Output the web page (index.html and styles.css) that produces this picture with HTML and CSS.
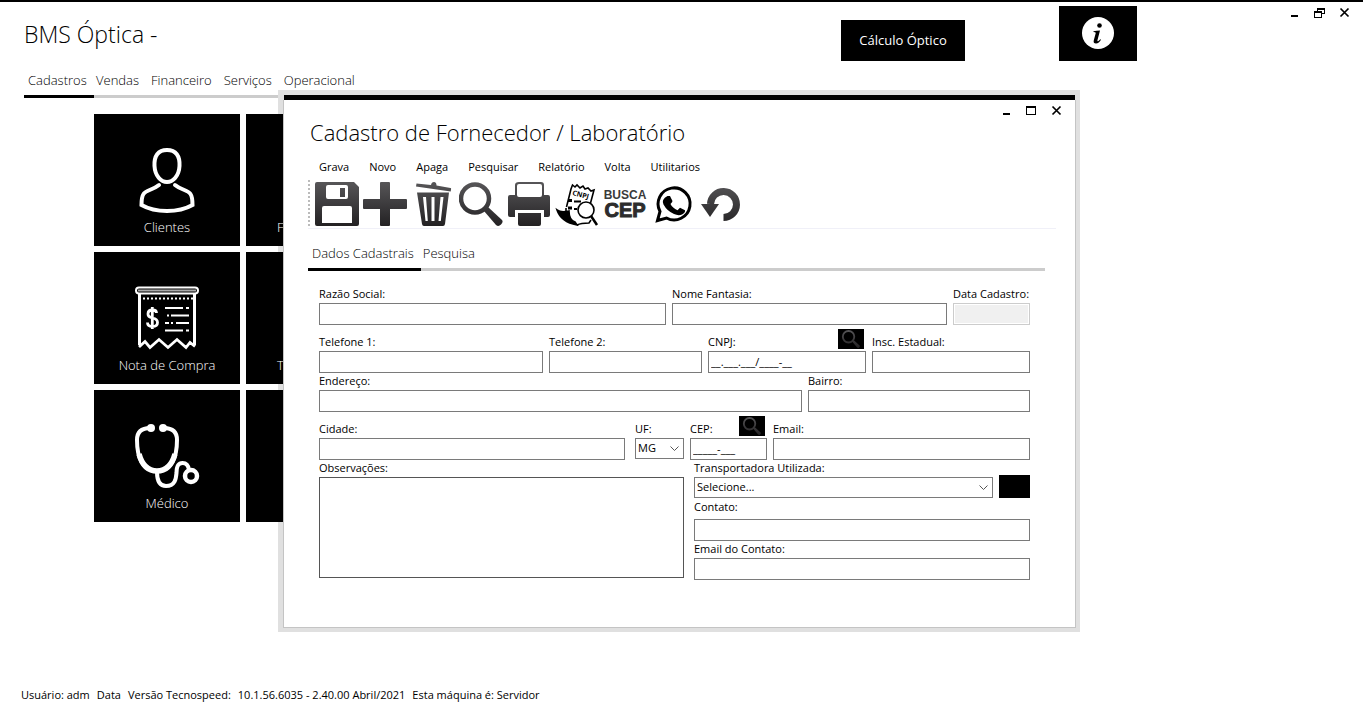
FILE: index.html
```html
<!DOCTYPE html>
<html lang="pt-BR">
<head>
<meta charset="utf-8">
<meta name="viewport" content="width=device-width, initial-scale=1">
<title>BMS Óptica</title>
<link rel="stylesheet" href="styles.css">
</head>
<body>
<svg class="defs" aria-hidden="true">
  <defs>
    <linearGradient id="steel" gradientUnits="userSpaceOnUse" x1="0" y1="0" x2="0" y2="44">
      <stop offset="0" stop-color="#575658"/>
      <stop offset="1" stop-color="#232123"/>
    </linearGradient>
    <symbol id="lens" viewBox="0 0 44 44">
      <circle cx="16" cy="16.500" r="14" fill="none" stroke="url(#steel)" stroke-width="4.500"/>
      <path d="M25 29l4-4 14 13q1.500 2-1 4.500t-5 .5z" fill="url(#steel)"/>
    </symbol>
    <symbol id="min" viewBox="0 0 11 11"><path d="M2 8h7v2H2z"/></symbol>
    <symbol id="max" viewBox="0 0 11 11"><path d="M0 1h10v9H0zM1 3v6h8V3z" fill-rule="evenodd"/></symbol>
    <symbol id="restore" viewBox="0 0 11 11"><path d="M3 1h8v6H8v4H0V4h3zM4 3v1h4v2h2V3zM1 6v4h6V6z" fill-rule="evenodd"/></symbol>
    <symbol id="close" viewBox="0 0 11 11"><path d="M1.500 1.500l8 8M9.500 1.500l-8 8" stroke="#000" stroke-width="1.700"/></symbol>
  </defs>
</svg>

<header class="topbar">
  <h1 class="title">BMS Óptica -</h1>
  <button class="calc" type="button">Cálculo Óptico</button>
  <button class="info" type="button" aria-label="Informações">
    <svg width="32" height="32" viewBox="0 0 32 32"><circle cx="16" cy="16" r="16" fill="#fff"/><circle cx="17.500" cy="8.500" r="2.300"/><path d="M11.500 14.200q3-.6 6.500-.7l-2.500 9.500q-.4 1.500.5 1.300 1-.3 2.300-2l.7.500q-2 3.700-5 3.700-3 0-2.200-3.200l1.900-7q.4-1.400-2.200-1.400z"/></svg>
  </button>
  <div class="controls">
    <button type="button" aria-label="Minimizar"><svg><use href="#min"/></svg></button>
    <button type="button" aria-label="Restaurar"><svg><use href="#restore"/></svg></button>
    <button type="button" aria-label="Fechar"><svg><use href="#close"/></svg></button>
  </div>
</header>

<nav class="mainnav">
  <a class="active" href="#cadastros">Cadastros</a>
  <a href="#vendas">Vendas</a>
  <a href="#financeiro">Financeiro</a>
  <a href="#servicos">Serviços</a>
  <a href="#operacional">Operacional</a>
</nav>

<main class="tiles">
  <button class="tile" type="button">
    <svg viewBox="0 0 64 64" fill="none" stroke="#fff" stroke-width="4" stroke-linecap="round"><path d="M32 2c9 0 13 6 12.500 16C44 28 38 34 32 34s-12-6-12.500-16C19 8 23 2 32 2z"/><path d="M24 37c-6 5-13 5-15.500 9-2 3-2 7-2 11 14 8 37 8 51 0 0-4 0-8-2-11-2.500-4-9.500-4-15.500-9"/></svg>
    <span>Clientes</span>
  </button>
  <button class="tile peek" type="button"><span>F</span></button>
  <button class="tile" type="button">
    <svg viewBox="0 0 64 64" fill="none" stroke="#fff"><rect x="1" y="1.500" width="62" height="6" rx="3" stroke-width="2"/><path d="M3 4.500h58" stroke="#aaa" stroke-width="2"/><path d="M4.500 8v51" stroke-width="3"/><path d="M59.500 8v51" stroke-width="3"/><path d="M4 61l6-5.500 5 6 9-8 9 8 9-8 9 8 4-5 5 4" stroke-width="2.800"/><path d="M8 12.500h50" stroke-width="2" stroke-dasharray="2 2"/><path d="M30 22h18M51 22h3M32 29.500h2M36 29.500h18M30 37h4M36 37h2M41 37h13M30 44.500h18M51 44.500h3" stroke-width="2.200"/><path d="M21.500 27q0-3-4-3-4.500 0-4.500 4 0 3 4.500 4 5 1 5 4.500 0 4-5 4-5 0-5-4M17.300 21v22" stroke-width="2.800"/></svg>
    <span>Nota de Compra</span>
  </button>
  <button class="tile peek" type="button"><span>Tr</span></button>
  <button class="tile" type="button">
    <svg viewBox="0 0 64 64" fill="none" stroke="#fff" stroke-width="4"><path d="M15 4C6 4 2 8 2 16c0 16 5 31 20 31s20-15 20-31c0-8-4-12-13-12"/><path d="M4 30c3 11 9 17 18 17s15-6 18-17" stroke-width="5.500"/><path d="M22 48c0 9 3 14 9 14 9 0 10-7 10.500-13 0-6 1-10 6-10 4 0 6 3 6.500 7"/><circle cx="56" cy="52" r="6" stroke-width="4.500"/><circle cx="16" cy="4" r="4" fill="#fff" stroke="none"/><circle cx="28" cy="4" r="4" fill="#fff" stroke="none"/></svg>
    <span>Médico</span>
  </button>
  <button class="tile peek" type="button" aria-label="Mais"></button>
</main>

<section class="dialog" role="dialog" aria-labelledby="dlg-title">
  <div class="controls">
    <button type="button" aria-label="Minimizar"><svg><use href="#min"/></svg></button>
    <button type="button" aria-label="Maximizar"><svg><use href="#max"/></svg></button>
    <button type="button" aria-label="Fechar"><svg><use href="#close"/></svg></button>
  </div>
  <h2 class="title" id="dlg-title">Cadastro de Fornecedor / Laboratório</h2>

  <div class="menu">
    <button type="button">Grava</button>
    <button type="button">Novo</button>
    <button type="button">Apaga</button>
    <button type="button">Pesquisar</button>
    <button type="button">Relatório</button>
    <button type="button">Volta</button>
    <button type="button">Utilitarios</button>
  </div>

  <div class="toolbar">
    <button type="button" aria-label="Gravar"><svg viewBox="0 0 44 44"><path fill="url(#steel)" fill-rule="evenodd" d="M2 0h37l5 5v37q0 2-2 2H2q-2 0-2-2V2q0-2 2-2zM13 3q-2 0-2 2v10q0 2 2 2h18q2 0 2-2V5q0-2-2-2zM25 6h5v9h-5zM9 24q-2 0-2 2v15h30V26q0-2-2-2z"/></svg></button>
    <button type="button" aria-label="Novo"><svg viewBox="0 0 44 44"><path fill="url(#steel)" d="M18 0h8q1 0 1 1v16h16q1 0 1 1v8q0 1-1 1H27v16q0 1-1 1h-8q-1 0-1-1V27H1q-1 0-1-1v-8q0-1 1-1h16V1q0-1 1-1z"/></svg></button>
    <button type="button" aria-label="Apagar"><svg viewBox="0 0 44 44"><path fill="url(#steel)" fill-rule="evenodd" d="M5.500 1.500L20 3q.5-3 3-3t2.500 3.500L39.500 6q.8.200.6 1l-.4 2.500L5 4.500zM6 10.500h32L34 42q-.3 2-2 2H13q-1.700 0-2-2zM12 15l2.500 24h2.300L15 15zM20.500 15v24h3V15zM29.500 15l-2 24h2.300l2.700-24z"/></svg></button>
    <button type="button" aria-label="Pesquisar"><svg><use href="#lens"/></svg></button>
    <button type="button" aria-label="Imprimir"><svg viewBox="0 0 44 44"><path fill="url(#steel)" fill-rule="evenodd" d="M12 0h22q3 0 3 3v10h4q2 0 2 2v18q0 2-2 2h-4v-7H8v7H3q-2 0-2-2V15q0-2 2-2h5V3q0-3 4-3zM12 2q-2 0-2 2v9q0 2 2 2h21q2 0 2-2V4q0-2-2-2zM11 31h23v11q0 2-2 2H13q-2 0-2-2z"/></svg></button>
    <button type="button" aria-label="Consultar CNPJ"><svg viewBox="0 0 44 44" fill="none" stroke="#000" stroke-width="1.600"><path d="M11.500 25L16 7l1.500-4L20 5l2-2 3 3 3-2 2 3 3-1 3 3 3-1-4 15"/><path d="M2 28q4 3 12 1 0 9 6 11l2 3Q6 40 2 28z" fill="#000"/><path d="M22 43q4-2 12-2l2-3M11 26v4"/><circle cx="31" cy="28" r="8" fill="#fff"/><path d="M36 34l6 9" stroke-width="2.500"/><path d="M13 18.500h4M13 26h4" stroke-width="3"/><path d="M19 19.500h7M19 27h3" stroke-width="2"/><text x="17" y="13" transform="rotate(14 17 13)" class="cnpj-text">CNPJ</text></svg></button>
    <button class="cep-logo" type="button"><span>BUSCA</span><strong>CEP</strong></button>
    <button type="button" aria-label="WhatsApp"><svg viewBox="0 0 44 44"><path d="M6.500 38.500l2.500-9A16 16 0 1 1 15.500 36z" fill="#fff" stroke="#000" stroke-width="3"/><path d="M16.500 14h2.500l2.500 5q0 1-2 3 2 4 7 6.200l2.500-2.500 5 2.500q.5 2.500-3 4.300-3.500 1.500-8-.5-7-3-10.500-9.500-2.500-5 4-8.500z"/></svg></button>
    <button type="button" aria-label="Voltar"><svg viewBox="0 0 44 44"><path d="M11.500 22a13 13 0 1 1 13 13.500" fill="none" stroke="url(#steel)" stroke-width="7"/><path d="M2 22h18l-9 13z" fill="url(#steel)"/></svg></button>
  </div>

  <div class="tabs">
    <button class="active" type="button">Dados Cadastrais</button>
    <button type="button">Pesquisa</button>
  </div>

  <form class="form">
    <div class="row row-name">
      <div class="field"><label for="razao">Razão Social:</label><input id="razao" type="text"></div>
      <div class="field"><label for="fantasia">Nome Fantasia:</label><input id="fantasia" type="text"></div>
      <div class="field"><label for="data">Data Cadastro:</label><input id="data" type="text" disabled></div>
    </div>
    <div class="row row-phone spaced">
      <div class="field"><label for="tel1">Telefone 1:</label><input id="tel1" type="text"></div>
      <div class="field"><label for="tel2">Telefone 2:</label><input id="tel2" type="text"></div>
      <div class="field">
        <div class="label-line"><label for="cnpj">CNPJ:</label><button class="lookup" type="button" aria-label="Buscar CNPJ"><svg><use href="#lens"/></svg></button></div>
        <input id="cnpj" type="text" value="__.___.___/____-__">
      </div>
      <div class="field"><label for="insc">Insc. Estadual:</label><input id="insc" type="text"></div>
    </div>
    <div class="row row-address">
      <div class="field"><label for="endereco">Endereço:</label><input id="endereco" type="text"></div>
      <div class="field"><label for="bairro">Bairro:</label><input id="bairro" type="text"></div>
    </div>
    <div class="row row-city spaced">
      <div class="field city"><label for="cidade">Cidade:</label><input id="cidade" type="text"></div>
      <div class="field"><label for="uf">UF:</label><select id="uf"><option>MG</option></select></div>
      <div class="field">
        <div class="label-line"><label for="cep">CEP:</label><button class="lookup" type="button" aria-label="Buscar CEP"><svg><use href="#lens"/></svg></button></div>
        <input id="cep" type="text" value="_____-___">
      </div>
      <div class="field"><label for="email">Email:</label><input id="email" type="text"></div>
    </div>
    <div class="row row-notes">
      <div class="field"><label for="obs">Observações:</label><textarea id="obs"></textarea></div>
      <div class="contact">
        <div class="field">
          <label for="transp">Transportadora Utilizada:</label>
          <div class="select-line"><select id="transp"><option>Selecione...</option></select><button class="add" type="button" aria-label="Nova transportadora"></button></div>
        </div>
        <div class="field loose"><label for="contato">Contato:</label><input id="contato" type="text"></div>
        <div class="field"><label for="email2">Email do Contato:</label><input id="email2" type="text"></div>
      </div>
    </div>
  </form>
</section>

<footer class="status">
  <span>Usuário: adm</span>
  <span>Data</span>
  <span>Versão Tecnospeed:</span>
  <span>10.1.56.6035 - 2.40.00 Abril/2021</span>
  <span>Esta máquina é: Servidor</span>
</footer>
</body>
</html>
```
FILE: styles.css
```css
* { box-sizing: border-box; }

body {
  margin: 0;
  min-height: 100vh;
  display: flex;
  flex-direction: column;
  border-top: 2px solid #000;
  background: #fff;
  color: #000;
  font: 11px/16px "Open Sans", "Noto Sans", sans-serif;
}

button, input, select, textarea { font: inherit; color: inherit; }

button {
  border: 0;
  padding: 0;
  background: none;
}

.defs { position: absolute; width: 0; height: 0; }

.title {
  margin: 0;
  font-weight: 300;
  font-size: 22px;
  line-height: 32px;
}

/* main window */
.topbar {
  display: flex;
  align-items: flex-start;
  height: 64px;
  padding: 0 6px 0 24px;
}
.topbar .title { flex: 1; margin-top: 16px; font-size: 23px; }

.calc {
  width: 124px;
  height: 41px;
  margin: 18px 94px 0 0;
  padding-bottom: 2px;
  background: #000;
  color: #fff;
  font-size: 13px;
}
.info {
  display: flex;
  align-items: center;
  justify-content: center;
  width: 78px;
  height: 55px;
  margin: 4px 145px 0 0;
  padding-bottom: 2px;
  background: #000;
}

.controls { display: flex; }
.controls button {
  display: flex;
  align-items: center;
  justify-content: center;
  width: 25px;
  height: 21px;
}
.controls svg { width: 11px; height: 11px; }

.mainnav {
  position: relative;
  display: flex;
  gap: 12px;
  margin-left: 24px;
}
.mainnav::after {
  content: "";
  position: absolute;
  z-index: -2;
  left: 0;
  bottom: 0;
  width: 280px;
  height: 3px;
  background: #ccc;
}
.mainnav a {
  height: 32px;
  border-bottom: 3px solid transparent;
  color: #000;
  font-size: 13px;
  font-weight: 300;
  line-height: 28px;
  text-decoration: none;
}
.mainnav .active {
  width: 70px;
  margin-right: -10px;
  padding-left: 4px;
  border-color: #000;
}

.tiles {
  flex: 1;
  display: grid;
  grid-template-columns: repeat(2, 146px);
  grid-auto-rows: 132px;
  align-content: start;
  gap: 6px;
  padding: 16px 0 0 94px;
}
.tile {
  display: flex;
  flex-direction: column;
  align-items: center;
  justify-content: flex-end;
  gap: 5px;
  padding-bottom: 9px;
  background: #000;
  color: #fff;
  font-size: 13px;
  font-weight: 300;
  line-height: 20px;
}
.tile svg { width: 64px; height: 64px; overflow: visible; }
.peek { align-items: flex-start; padding-left: 31px; }

.status {
  display: flex;
  gap: 7px;
  padding: 0 21px 22px;
}

/* child window */
.dialog {
  position: absolute;
  top: 95px;
  left: 284px;
  right: 288px;
  min-width: 640px;
  padding-bottom: 47px;
  border-top: 5px solid #000;
  background: #fff;
}
.dialog::before {
  content: "";
  position: absolute;
  z-index: -1;
  inset: -10px -5px -5px -6px;
  background: #e0e0e0;
}
.dialog::after {
  content: "";
  position: absolute;
  inset: 0 -1px -1px;
  border: solid #c4c4c4;
  border-width: 0 1px 1px;
  pointer-events: none;
}
.dialog .controls { justify-content: flex-end; padding-right: 6px; }
.dialog .title { padding-left: 26px; margin-top: -5px; }

.menu {
  display: flex;
  gap: 20px;
  padding: 11px 0 0 35px;
}

.toolbar {
  position: relative;
  display: flex;
  gap: 4px;
  margin: 5px 19px 0 24px;
  padding: 2px 0 2px 7px;
  border-bottom: 1px solid #f0f0f8;
}
.toolbar::before {
  content: "";
  position: absolute;
  left: 0;
  top: 0;
  bottom: 2px;
  border-left: 2px dotted #bbb;
}
.toolbar button { width: 44px; height: 44px; }
.toolbar svg { display: block; width: 44px; height: 44px; }
.cnpj-text { font: 700 7px "Open Sans", sans-serif; fill: #000; stroke: none; }

.toolbar .cep-logo {
  display: flex;
  flex-direction: column;
  align-items: center;
  justify-content: center;
  color: #3a3a3a;
  font: 700 12px/12px "Liberation Sans", sans-serif;
}
.cep-logo strong {
  font-size: 20px;
  line-height: 18px;
  color: #2c2c2c;
  -webkit-text-stroke: 1px #2c2c2c;
}

.tabs {
  display: flex;
  gap: 2px;
  margin: 10px 30px 0 24px;
  box-shadow: inset 0 -3px #ccc;
}
.tabs button {
  height: 32px;
  padding-bottom: 2px;
  border-bottom: 3px solid transparent;
  font-size: 13px;
  font-weight: 300;
  line-height: 26px;
}
.tabs .active { padding: 0 7px 2px 4px; border-color: #000; }

.form { padding: 15px 45px 0 35px; }
.row { display: grid; gap: 6px; margin-top: 1px; }
.spaced { margin-top: 10px; }
.row-name { grid-template-columns: 347fr 275fr 77fr; }
.row-phone { grid-template-columns: 224fr 153fr 158fr 158fr; }
.row-address { grid-template-columns: 483fr 222fr; }
.row-city { grid-template-columns: 310fr 49fr 77fr 257fr; }
.row-notes { grid-template-columns: 365fr 336fr; gap: 10px; }

.field {
  display: flex;
  flex-direction: column;
  min-width: 0;
}
.city { padding-right: 4px; }
.field label { height: 16px; line-height: 14px; white-space: nowrap; }

.field input, .field select, .field textarea {
  width: 100%;
  min-width: 0;
  margin: 0;
  border: 1px solid #7a7a7a;
  border-radius: 0;
  background: #fff;
}
.field input { height: 22px; padding: 0 2px 2px; }
.field input:disabled {
  border-color: #ccc;
  background: #f0f0f0;
  box-shadow: inset 0 0 0 1px #fff;
}
.field select {
  height: 21px;
  padding: 0 18px 1px 2px;
  appearance: none;
  background: #fff url("data:image/svg+xml,%3Csvg xmlns='http://www.w3.org/2000/svg' width='9' height='6'%3E%3Cpath d='M.5 .5l4 4 4-4' fill='none' stroke='%23555'/%3E%3C/svg%3E") no-repeat right 4px center;
}
.field textarea {
  height: 101px;
  border-color: #555;
  resize: none;
}

.label-line {
  display: flex;
  align-items: flex-end;
  justify-content: space-between;
  height: 16px;
}
.lookup {
  width: 26px;
  height: 20px;
  margin: 0 2px 2px 0;
  background: #000;
}
.lookup svg { display: block; width: 20px; height: 18px; margin: 0 auto; }

.select-line { display: flex; align-items: flex-end; gap: 6px; height: 21px; }
.add { flex: none; width: 31px; height: 23px; background: #000; }
.contact { display: flex; flex-direction: column; gap: 1px; }
.loose { gap: 3px; margin-top: 1px; }
```
